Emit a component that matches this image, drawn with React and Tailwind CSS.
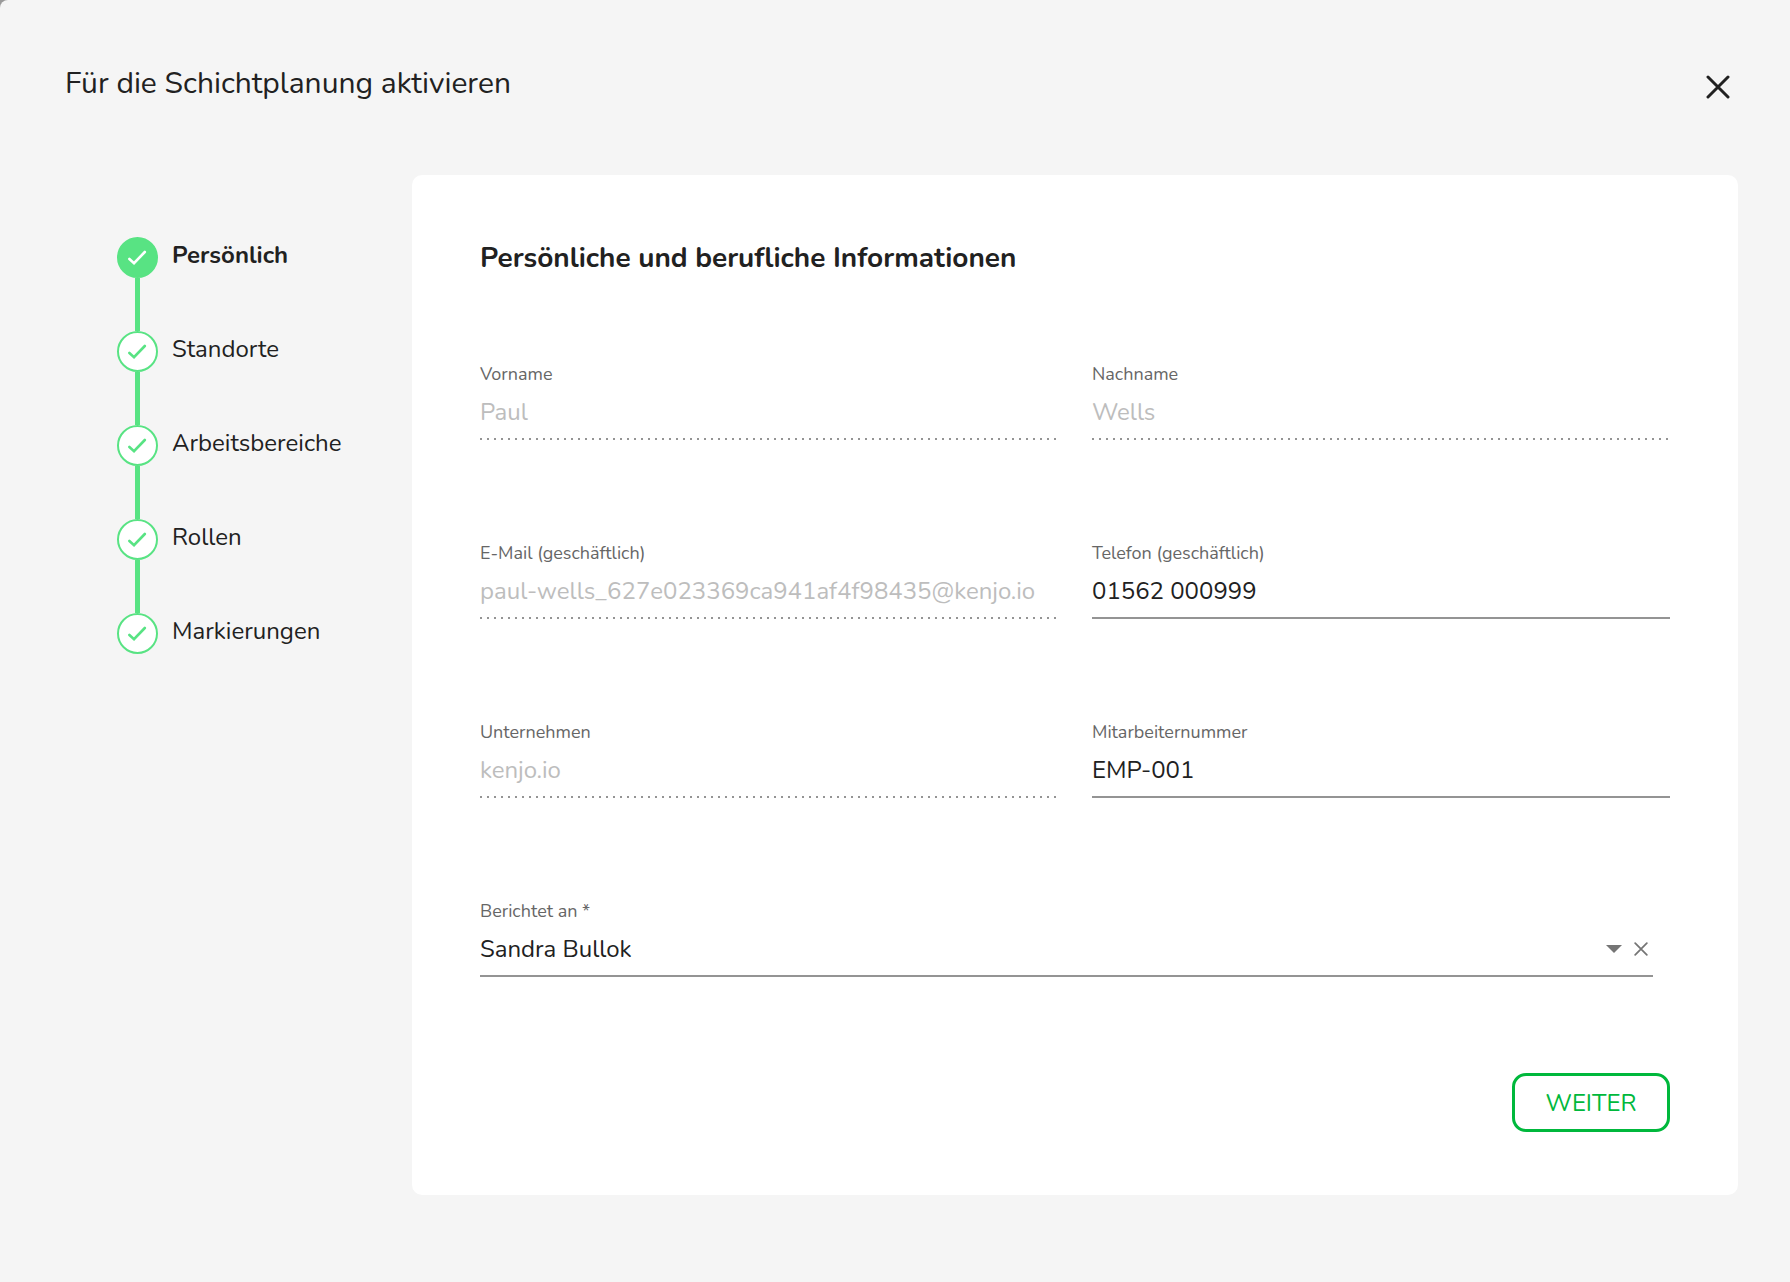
const steps = ["Persönlich", "Standorte", "Arbeitsbereiche", "Rollen", "Markierungen"];

const fields = [
  { id: "vorname", label: "Vorname", value: "Paul", disabled: true },
  { id: "nachname", label: "Nachname", value: "Wells", disabled: true },
  {
    id: "email",
    label: "E-Mail (geschäftlich)",
    value: "paul-wells_627e023369ca941af4f98435@kenjo.io",
    disabled: true,
  },
  { id: "telefon", label: "Telefon (geschäftlich)", value: "01562 000999" },
  { id: "unternehmen", label: "Unternehmen", value: "kenjo.io", disabled: true },
  { id: "nummer", label: "Mitarbeiternummer", value: "EMP-001" },
];

function Cross({ className, strokeWidth }) {
  return (
    <svg viewBox="0 0 24 24" className={className} fill="none" stroke="currentColor" strokeWidth={strokeWidth} strokeLinecap="round" aria-hidden="true">
      <path d="M2 2 22 22M22 2 2 22" />
    </svg>
  );
}

function Step({ label, active, last }) {
  return (
    <li className="flex gap-[14px]">
      <div className="flex flex-col items-center">
        <span
          className={
            active
              ? "flex size-[41px] items-center justify-center rounded-full border-2 border-[#58e383] bg-[#58e383] text-white"
              : "flex size-[41px] items-center justify-center rounded-full border-2 border-[#58e383] bg-white text-[#58e383]"
          }
        >
          <svg viewBox="0 0 19 15" className="h-[15px] w-[19px]" fill="none" stroke="currentColor" strokeWidth="2.6" strokeLinecap="round" aria-hidden="true">
            <path d="M1.4 9 6 13.2 16.8 2" />
          </svg>
        </span>
        {!last && <span className="h-[53px] w-[5px] bg-[#58e383]" />}
      </div>
      <button
        type="button"
        aria-current={active ? "step" : undefined}
        className={active ? "h-9 text-2xl leading-9 font-bold" : "h-9 text-2xl leading-9"}
      >
        {label}
      </button>
    </li>
  );
}

function Field({ id, label, value, disabled }) {
  return (
    <div className="flex flex-col">
      <label htmlFor={id} className="text-lg leading-6 text-[#666666]">
        {label}
      </label>
      <input
        id={id}
        type="text"
        defaultValue={value}
        disabled={disabled}
        className="mt-2 h-9 w-full bg-transparent text-2xl leading-9 outline-none disabled:text-[#bdbdbd]"
      />
      <div
        className={
          disabled
            ? "mt-2 h-[2px] bg-[repeating-linear-gradient(to_right,#949494_0_2px,transparent_2px_7px)]"
            : "mt-2 h-[2px] bg-[#949494]"
        }
      />
    </div>
  );
}

export default function App() {
  return (
    <div className="bg-[#9a9a9a] font-[Nunito,Lato,sans-serif] text-[#212121]">
      <div className="min-h-screen rounded-tl-lg bg-[#f5f5f5] pr-[52px] pb-[87px] pl-[65px]">
        <header className="flex h-[175px] items-start justify-between pt-16">
          <h1 className="text-3xl leading-10">Für die Schichtplanung aktivieren</h1>
          <button type="button" aria-label="Schließen" className="mr-2 p-0 pt-[11px]">
            <Cross className="size-6" strokeWidth={3} />
          </button>
        </header>

        <main className="flex">
          <nav aria-label="Schritte" className="w-[347px] shrink-0 pt-[62px] pl-[52px]">
            <ol>
              {steps.map((label, i) => (
                <Step key={label} label={label} active={i === 0} last={i === steps.length - 1} />
              ))}
            </ol>
          </nav>

          <form className="min-w-0 flex-1 rounded-[10px] bg-white px-[68px] pt-[63px] pb-[63px]" onSubmit={(e) => e.preventDefault()}>
            <h2 className="text-[28px] leading-10 font-bold">Persönliche und berufliche Informationen</h2>

            <div className="mt-[84px] grid grid-cols-2 gap-x-[34px] gap-y-[101px]">
              {fields.map((f) => (
                <Field key={f.id} {...f} />
              ))}
            </div>

            <div className="mt-[101px] mr-[17px] flex flex-col">
              <label htmlFor="berichtet" className="text-lg leading-6 text-[#666666]">
                Berichtet an *
              </label>
              <div className="mt-2 flex h-9 items-center">
                <select id="berichtet" className="h-9 min-w-0 flex-1 appearance-none bg-transparent text-2xl leading-9 outline-none">
                  <option>Sandra Bullok</option>
                </select>
                <svg viewBox="0 0 16 8" className="h-2 w-4 text-[#757575]" fill="currentColor" aria-hidden="true">
                  <path d="M0 0H16L8 8Z" />
                </svg>
                <button type="button" aria-label="Auswahl löschen" className="mr-[5px] ml-3 text-[#757575]">
                  <Cross className="size-[14px]" strokeWidth={3} />
                </button>
              </div>
              <div className="mt-2 h-[2px] bg-[#949494]" />
            </div>

            <div className="mt-24 flex justify-end">
              <button type="submit" className="h-[59px] min-w-[158px] rounded-[14px] border-3 border-[#00b83c] px-6 text-2xl text-[#00b83c]">
                WEITER
              </button>
            </div>
          </form>
        </main>
      </div>
    </div>
  );
}
